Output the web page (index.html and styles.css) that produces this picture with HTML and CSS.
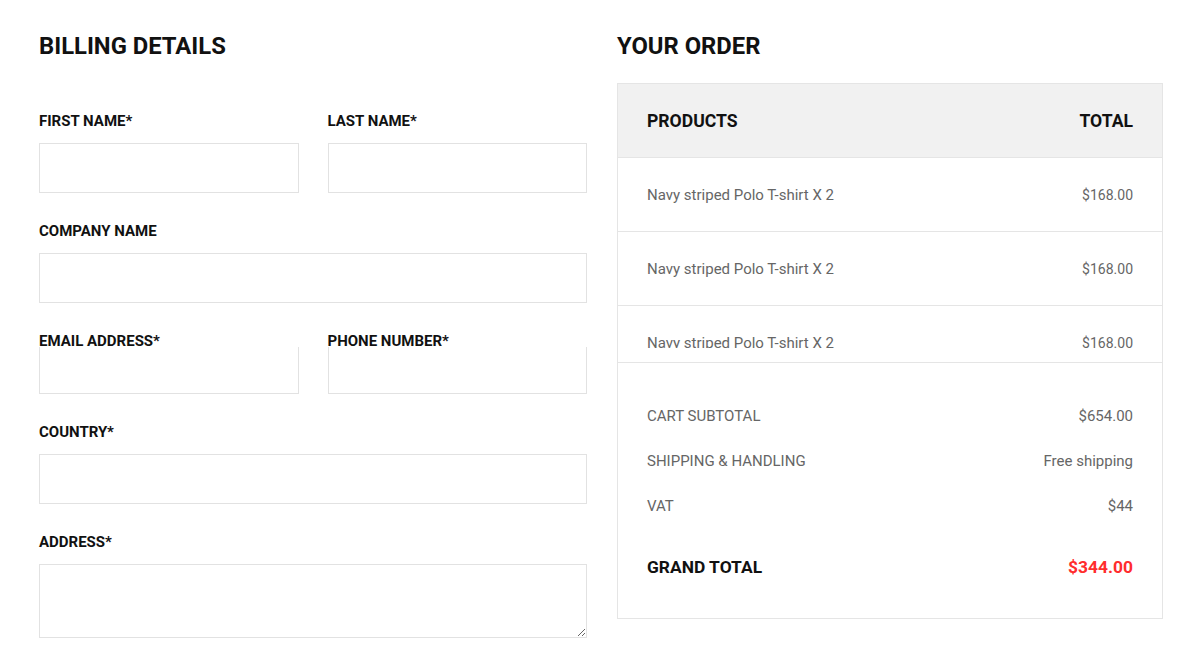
FILE: index.html
```html
<!DOCTYPE html>
<html lang="en">
<head>
<meta charset="utf-8">
<title>Checkout</title>
<link rel="stylesheet" href="styles.css">
</head>
<body>
<div class="page">
  <section class="billing">
    <h2 class="title">BILLING DETAILS</h2>
    <form class="form">
      <div class="row">
        <div class="field"><label class="label">FIRST NAME*</label><input class="input" type="text"></div>
        <div class="field"><label class="label">LAST NAME*</label><input class="input" type="text"></div>
      </div>
      <div class="field"><label class="label">COMPANY NAME</label><input class="input" type="text"></div>
      <div class="row tight">
        <div class="field"><label class="label">EMAIL ADDRESS*</label><input class="input" type="text"></div>
        <div class="field"><label class="label">PHONE NUMBER*</label><input class="input" type="text"></div>
      </div>
      <div class="field"><label class="label">COUNTRY*</label><input class="input" type="text"></div>
      <div class="field"><label class="label">ADDRESS*</label><textarea class="textarea"></textarea></div>
    </form>
  </section>
  <section class="order">
    <h2 class="title">YOUR ORDER</h2>
    <div class="order-box">
      <div class="order-head"><span>PRODUCTS</span><span>TOTAL</span></div>
      <div class="products-wrap">
        <div class="products">
          <div class="product"><span class="name">Navy striped Polo T-shirt X 2</span><span class="price">$168.00</span></div>
          <div class="product"><span class="name">Navy striped Polo T-shirt X 2</span><span class="price">$168.00</span></div>
          <div class="product"><span class="name">Navy striped Polo T-shirt X 2</span><span class="price">$168.00</span></div>
        </div>
      </div>
      <div class="totals">
        <div class="total-row"><span>CART SUBTOTAL</span><span>$654.00</span></div>
        <div class="total-row"><span>SHIPPING &amp; HANDLING</span><span>Free shipping</span></div>
        <div class="total-row"><span>VAT</span><span>$44</span></div>
        <div class="total-row grand"><span>GRAND TOTAL</span><span class="amount">$344.00</span></div>
      </div>
    </div>
  </section>
</div>
</body>
</html>
```
FILE: styles.css
```css
body {
  margin: 0;
  background: #fff;
  font-family: Roboto, "Liberation Sans", Arial, sans-serif;
  color: #111;
}

.page {
  display: grid;
  grid-template-columns: 548px 546px;
  column-gap: 30px;
  padding: 31px 0 0 39px;
  align-items: start;
}

.title {
  margin: 0;
  font-size: 23.8px;
  line-height: 30px;
  font-weight: 700;
  color: #111;
}

.form {
  margin-top: 49px;
  display: flex;
  flex-direction: column;
  gap: 27px;
}

.row {
  display: grid;
  grid-template-columns: 1fr 1fr;
  column-gap: 29px;
}

.label {
  display: block;
  font-size: 15px;
  line-height: 22px;
  font-weight: 700;
  color: #111;
  margin-bottom: 11px;
}

.input,
.textarea {
  display: block;
  width: 100%;
  box-sizing: border-box;
  border: 1px solid #e2e2e2;
  border-radius: 0;
  background: #fff;
  margin: 0;
  font-family: inherit;
}

.input {
  height: 50px;
}

.tight .label {
  margin-bottom: -5px;
}

.tight .input {
  height: 47px;
  border-top: 0;
}

.textarea {
  height: 74px;
  resize: vertical;
}

.order-box {
  margin-top: 22px;
  border: 1px solid #e5e5e5;
}

.order-head {
  display: flex;
  justify-content: space-between;
  align-items: center;
  height: 73px;
  padding: 0 29px;
  background: #f1f1f1;
  border-bottom: 1px solid #e5e5e5;
  font-size: 17.6px;
  font-weight: 700;
  color: #111;
}

.products-wrap {
  padding-bottom: 14px;
  border-bottom: 1px solid #e5e5e5;
}

.products {
  height: 190px;
  overflow: hidden;
}

.product {
  display: flex;
  justify-content: space-between;
  align-items: center;
  height: 73px;
  padding: 0 29px;
  border-bottom: 1px solid #e5e5e5;
  line-height: 20px;
  color: #666;
}

.product .name {
  font-size: 15px;
}

.product .price {
  font-size: 14px;
}

.totals {
  padding: 31px 29px 27px;
}

.total-row {
  display: flex;
  justify-content: space-between;
  font-size: 15px;
  line-height: 45px;
  color: #666;
}

.grand {
  margin-top: 14px;
  font-size: 17.4px;
  line-height: 48px;
  font-weight: 700;
  color: #111;
}

.grand .amount {
  color: #ff2d2d;
}
```
